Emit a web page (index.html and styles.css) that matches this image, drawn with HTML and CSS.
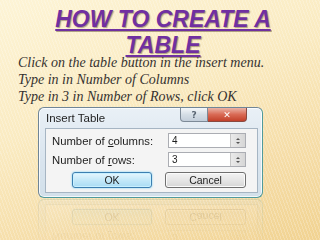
FILE: index.html
```html
<!DOCTYPE html>
<html>
<head>
<meta charset="utf-8">
<link rel="stylesheet" href="styles.css">
</head>
<body>
<div class="slide">
  <h1 class="title">HOW TO CREATE A<br>TABLE</h1>
  <p class="body">Click on the table button in the insert menu.<br>Type in in Number of Columns<br>Type in 3 in Number of Rows, click OK</p>
  <div class="dialog">
    <div class="titlebar">
      <span class="dtitle">Insert Table</span>
      <div class="caption">
        <span class="help">?</span>
        <span class="close">✕</span>
      </div>
    </div>
    <div class="panel">
      <div class="row">
        <span class="label">Number of <u>c</u>olumns:</span>
        <div class="spin"><span class="field">4</span><span class="arrows"><i class="up"></i><i class="dn"></i></span></div>
      </div>
      <div class="row">
        <span class="label">Number of <u>r</u>ows:</span>
        <div class="spin"><span class="field">3</span><span class="arrows"><i class="up"></i><i class="dn"></i></span></div>
      </div>
      <div class="buttons">
        <span class="btn ok">OK</span>
        <span class="btn cancel">Cancel</span>
      </div>
    </div>
  </div>
</div>
</body>
</html>
```
FILE: styles.css
```css
html, body {
  margin: 0;
  padding: 0;
}
.slide {
  width: 320px;
  height: 240px;
  overflow: hidden;
  box-sizing: border-box;
  padding-top: 6px;
  background:
    repeating-linear-gradient(70deg, rgba(255,255,255,0.22) 0 1px, rgba(255,255,255,0) 1px 3px),
    linear-gradient(160deg, #fdf4d6 0%, #faebc2 40%, #f5dca6 75%, #f1d392 100%);
}
.title {
  position: relative;
  margin: 0;
  padding-left: 6px;
  text-align: center;
  font-family: "Liberation Sans", Arial, sans-serif;
  font-weight: bold;
  font-style: italic;
  font-size: 23px;
  line-height: 26px;
  color: #7030a0;
  text-decoration: underline;
  text-decoration-thickness: 2px;
  text-underline-offset: 2px;
  text-shadow: 1px 1px 1px rgba(80,60,40,0.45);
}
.body {
  margin: -4px 0 0 18px;
  font-family: "Liberation Serif", "Times New Roman", serif;
  font-style: italic;
  font-size: 14px;
  line-height: 17px;
  color: #363230;
}
.dialog {
  margin: 2px 0 0 38px;
  width: 225px;
  height: 91px;
  box-sizing: border-box;
  border: 1px solid #6f8597;
  border-right-color: #4f9a9c;
  border-bottom-color: #4f9a9c;
  border-radius: 6px;
  background: linear-gradient(#e9f0f6, #d9e4ee 60%, #d2e0ea);
  box-shadow: inset 0 0 0 1px rgba(255,255,255,0.75);
  display: flex;
  flex-direction: column;
  -webkit-box-reflect: below 1px linear-gradient(rgba(255,255,255,0) 50%, rgba(255,255,255,0.16));
}
.titlebar {
  height: 20px;
  display: flex;
  justify-content: space-between;
  align-items: flex-start;
  padding-left: 7px;
}
.dtitle {
  font-family: "Liberation Sans", Arial, sans-serif;
  font-size: 11.5px;
  line-height: 11px;
  margin-top: 5px;
  color: #1e1e1e;
}
.caption {
  display: flex;
  margin-right: 15px;
}
.help, .close {
  height: 14px;
  box-sizing: border-box;
  display: flex;
  align-items: center;
  justify-content: center;
  font-family: "DejaVu Sans", sans-serif;
  font-size: 9px;
  border: 1px solid #7d8a97;
  border-top: none;
}
.help {
  width: 28px;
  border-radius: 0 0 0 4px;
  background: linear-gradient(#f4f7fa, #d5dee6 50%, #c3ceda);
  color: #5a6673;
  font-weight: bold;
}
.close {
  width: 39px;
  border-left: none;
  border-color: #8a4a40;
  border-radius: 0 0 4px 0;
  background: linear-gradient(#eab3a6, #d96a55 50%, #c2402a);
  color: #fff;
  font-weight: bold;
}
.panel {
  flex: 1;
  margin: 0 4px 4px 6px;
  border: 1px solid #a6b5c3;
  background: #f4f4f4;
  padding: 4px 11px 0 6px;
  display: flex;
  flex-direction: column;
}
.row {
  display: flex;
  justify-content: space-between;
  align-items: center;
  height: 15px;
  margin-bottom: 4px;
}
.label {
  font-family: "Liberation Sans", Arial, sans-serif;
  font-size: 11.3px;
  color: #1e1e1e;
}
.spin {
  display: flex;
  width: 78px;
  height: 15px;
  box-sizing: border-box;
  border: 1px solid #abadb3;
  background: #fff;
}
.field {
  flex: 1;
  font-family: "Liberation Sans", Arial, sans-serif;
  font-size: 10px;
  line-height: 13px;
  padding-left: 3px;
  color: #1e1e1e;
}
.arrows {
  width: 14px;
  display: flex;
  flex-direction: column;
  justify-content: center;
  align-items: center;
  gap: 2px;
  background: linear-gradient(90deg, #eaeaea, #d6d6d6);
  border-left: 1px solid #c7c7c7;
}
.arrows i {
  width: 0;
  height: 0;
  border-left: 2px solid transparent;
  border-right: 2px solid transparent;
}
.arrows .up { border-bottom: 2px solid #555; }
.arrows .dn { border-top: 2px solid #555; }
.buttons {
  display: flex;
  justify-content: space-between;
  padding-left: 20px;
  margin-top: 1px;
}
.btn {
  height: 16px;
  box-sizing: border-box;
  display: flex;
  align-items: center;
  justify-content: center;
  font-family: "Liberation Sans", Arial, sans-serif;
  font-size: 10.5px;
  color: #1e1e1e;
  border-radius: 3px;
}
.ok {
  width: 80px;
  border: 1px solid #3c7fb1;
  background: linear-gradient(#e6f6fd, #c4e9f9 50%, #a9dcf4);
  box-shadow: 0 0 2px #5fc8f0, inset 0 0 0 1px #c8f0ff;
}
.cancel {
  width: 81px;
  border: 1px solid #707070;
  background: linear-gradient(#f3f3f3, #e6e6e6 50%, #d6d6d6);
  box-shadow: inset 0 0 0 1px #fbfbfb;
}
```
